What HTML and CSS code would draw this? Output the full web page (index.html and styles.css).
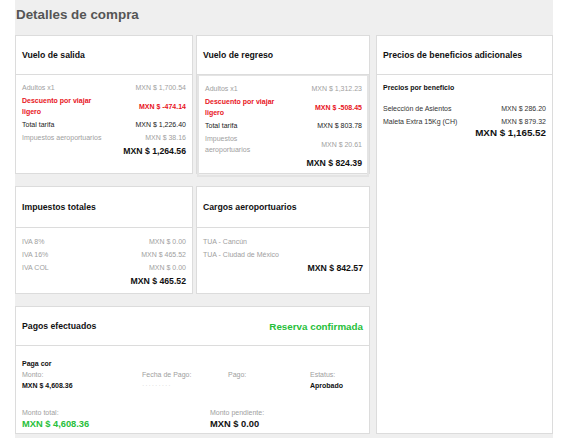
FILE: index.html
```html
<!DOCTYPE html>
<html lang="es">
<head>
<meta charset="utf-8">
<link rel="stylesheet" href="styles.css">
</head>
<body>
<div class="page">
  <h1 class="title">Detalles de compra</h1>
  <div class="grid">
    <section class="card">
      <div class="card-head"><h2>Vuelo de salida</h2></div>
      <div class="card-body">
        <div class="row muted"><span class="lbl">Adultos x1</span><span class="val">MXN $ 1,700.54</span></div>
        <div class="row red"><span class="lbl">Descuento por viajar ligero</span><span class="val">MXN $ -474.14</span></div>
        <div class="row dark"><span class="lbl">Total tarifa</span><span class="val">MXN $ 1,226.40</span></div>
        <div class="row muted"><span class="lbl">Impuestos aeroportuarios</span><span class="val">MXN $ 38.16</span></div>
        <div class="total">MXN $ 1,264.56</div>
      </div>
    </section>

    <section class="card">
      <div class="card-head"><h2>Vuelo de regreso</h2></div>
      <div class="card-body boxed">
        <div class="row muted"><span class="lbl">Adultos x1</span><span class="val">MXN $ 1,312.23</span></div>
        <div class="row red"><span class="lbl">Descuento por viajar ligero</span><span class="val">MXN $ -508.45</span></div>
        <div class="row dark"><span class="lbl">Total tarifa</span><span class="val">MXN $ 803.78</span></div>
        <div class="row muted"><span class="lbl">Impuestos aeroportuarios</span><span class="val">MXN $ 20.61</span></div>
        <div class="total">MXN $ 824.39</div>
      </div>
    </section>

    <section class="card side">
      <div class="card-head"><h2>Precios de beneficios adicionales</h2></div>
      <div class="card-body">
        <div class="subtitle">Precios por beneficio</div>
        <div class="row dark-soft"><span class="lbl">Selección de Asientos</span><span class="val">MXN $ 286.20</span></div>
        <div class="row dark-soft"><span class="lbl">Maleta Extra 15Kg (CH)</span><span class="val">MXN $ 879.32</span></div>
        <div class="total big">MXN $ 1,165.52</div>
      </div>
    </section>

    <section class="card">
      <div class="card-head tall"><h2>Impuestos totales</h2></div>
      <div class="card-body pad2">
        <div class="row muted"><span class="lbl">IVA 8%</span><span class="val">MXN $ 0.00</span></div>
        <div class="row muted"><span class="lbl">IVA 16%</span><span class="val">MXN $ 465.52</span></div>
        <div class="row muted"><span class="lbl">IVA COL</span><span class="val">MXN $ 0.00</span></div>
        <div class="total">MXN $ 465.52</div>
      </div>
    </section>

    <section class="card">
      <div class="card-head tall"><h2>Cargos aeroportuarios</h2></div>
      <div class="card-body pad2">
        <div class="row muted"><span class="lbl wide">TUA - Cancún</span><span class="val"></span></div>
        <div class="row muted"><span class="lbl wide">TUA - Ciudad de México</span><span class="val"></span></div>
        <div class="total">MXN $ 842.57</div>
      </div>
    </section>

    <section class="card pagos">
      <div class="card-head split"><h2>Pagos efectuados</h2><span class="status">Reserva confirmada</span></div>
      <div class="card-body pagos-body">
        <div class="subtitle tight">Paga cor</div>
        <div class="pay-grid">
          <div class="pay-col"><span class="k">Monto:</span><span class="v">MXN $ 4,608.36</span></div>
          <div class="pay-col"><span class="k">Fecha de Pago:</span><span class="v blur">· · · · · · · · ·</span></div>
          <div class="pay-col"><span class="k">Pago:</span><span class="v"></span></div>
          <div class="pay-col"><span class="k">Estatus:</span><span class="v">Aprobado</span></div>
        </div>
        <div class="sum-grid">
          <div class="sum-col"><span class="k">Monto total:</span><span class="amt green">MXN $ 4,608.36</span></div>
          <div class="sum-col"><span class="k">Monto pendiente:</span><span class="amt">MXN $ 0.00</span></div>
        </div>
      </div>
    </section>
  </div>
</div>
</body>
</html>
```

FILE: styles.css
```css
* { box-sizing: border-box; }
html, body { margin: 0; padding: 0; background: #fff; }
body { font-family: "Liberation Sans", Arial, sans-serif; color: #222; }

.page {
  margin-left: 15px;
  width: 538px;
  height: 438px;
  background: #efefef;
}

.title {
  margin: 0;
  height: 35px;
  padding: 6px 0 0 1px;
  font-size: 13.4px;
  line-height: 18px;
  font-weight: bold;
  color: #555;
}

.grid {
  display: grid;
  grid-template-columns: 178px 174px 180px;
  grid-template-rows: 139px 108px 128px;
  column-gap: 3px;
  row-gap: 12px;
}

.card {
  background: #fff;
  border: 1px solid #dcdcdc;
  display: flex;
  flex-direction: column;
  min-width: 0;
}

.side { grid-column: 3; grid-row: 1 / span 3; margin-left: 3px; }
.pagos { grid-column: 1 / span 2; }

.card-head {
  height: 39px;
  border-bottom: 1px solid #dcdcdc;
  display: flex;
  align-items: center;
  padding: 0 6px;
  flex: none;
}
.card-head.tall { height: 41px; }
.card-head h2 {
  margin: 0;
  font-size: 8.7px;
  font-weight: bold;
  color: #111;
}
.card-head.split { justify-content: space-between; }
.status {
  font-size: 9.8px;
  font-weight: bold;
  color: #27c03a;
}

.card-body {
  padding: 7px 6px 6px;
  flex: 1;
}
.card-body.boxed {
  border: 2px solid #e4e4e4;
  border-top-width: 1px;
  padding: 7px 5px 6px 6px;
}
.card-body.pad2 { padding-top: 8px; }

.row {
  display: flex;
  justify-content: space-between;
  align-items: center;
  font-size: 7px;
  line-height: 11px;
  margin-bottom: 2px;
}
.row .lbl { flex: 0 0 50%; }
.row .lbl.wide { flex: 1 1 auto; }
.row .val { text-align: right; white-space: nowrap; }
.muted { color: #a0a0a0; }
.red { color: #e8141c; font-weight: bold; }
.dark { color: #1a1a1a; }
.dark-soft { color: #333; }

.total {
  text-align: right;
  font-size: 8.7px;
  font-weight: bold;
  line-height: 12px;
  color: #111;
}
.total.big { font-size: 9.8px; line-height: 11px; margin-top: -2px; }

.subtitle {
  font-size: 7px;
  font-weight: bold;
  color: #111;
  line-height: 11px;
  margin-bottom: 10px;
}
.subtitle.tight { margin-bottom: 0; }

.pagos-body { padding-top: 12px; }

.pay-grid {
  display: grid;
  grid-template-columns: 120px 86px 82px 1fr;
}
.pay-col { display: flex; flex-direction: column; }
.pay-col .k, .sum-col .k {
  font-size: 7px;
  line-height: 11px;
  color: #a0a0a0;
}
.pay-col .v {
  font-size: 7px;
  line-height: 11px;
  font-weight: bold;
  color: #111;
  min-height: 11px;
}
.pay-col .v.blur { color: #d6d6d6; font-weight: normal; letter-spacing: -0.5px; }

.sum-grid {
  display: grid;
  grid-template-columns: 188px 1fr;
  margin-top: 16px;
}
.sum-col { display: flex; flex-direction: column; }
.amt {
  font-size: 9.3px;
  font-weight: bold;
  line-height: 12px;
  color: #111;
}
.amt.green { color: #27c03a; }
```
